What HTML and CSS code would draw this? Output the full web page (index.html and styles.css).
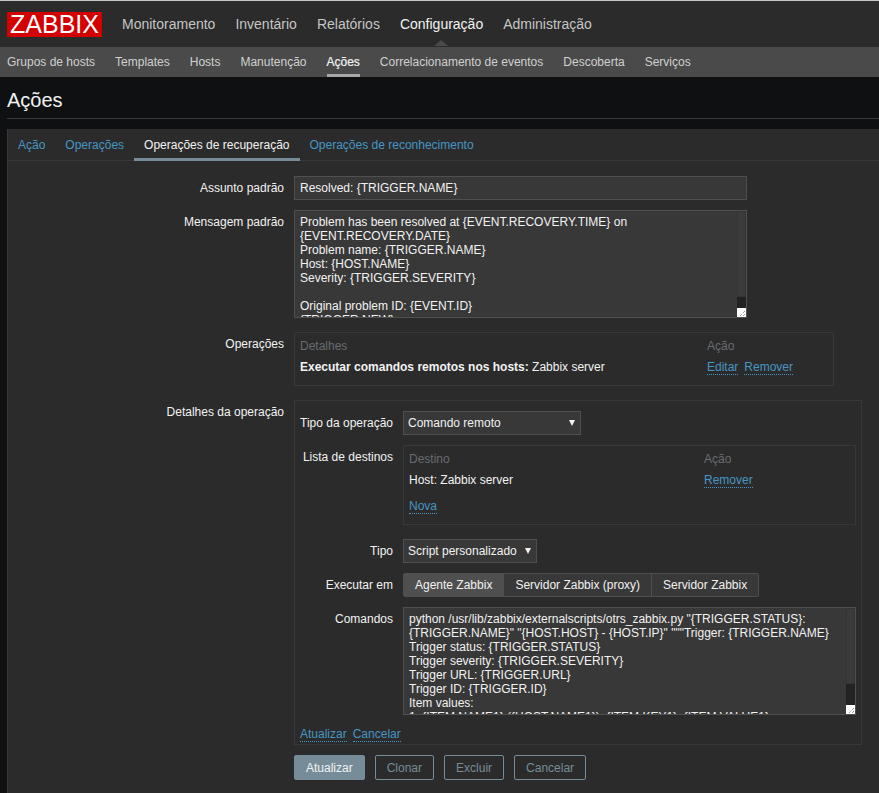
FILE: index.html
```html
<!DOCTYPE html>
<html lang="pt">
<head>
<meta charset="UTF-8" />
<meta name="viewport" content="width=device-width, initial-scale=1" />
<title>Ações</title>
<link rel="stylesheet" href="styles.css">
</head>
<body>

<header class="topbar">
  <a class="logo" href="#">ZABBIX</a>
  <nav class="mainnav">
    <a href="#">Monitoramento</a>
    <a href="#">Inventário</a>
    <a href="#">Relatórios</a>
    <a href="#" class="selected">Configuração</a>
    <a href="#">Administração</a>
  </nav>
</header>

<nav class="subnav">
  <a href="#">Grupos de hosts</a>
  <a href="#">Templates</a>
  <a href="#">Hosts</a>
  <a href="#">Manutenção</a>
  <a href="#" class="selected">Ações</a>
  <a href="#">Correlacionamento de eventos</a>
  <a href="#">Descoberta</a>
  <a href="#">Serviços</a>
</nav>

<h1 class="page-title">Ações</h1>

<main class="panel">
  <div class="tabs">
    <a href="#">Ação</a>
    <a href="#">Operações</a>
    <a href="#" class="selected">Operações de recuperação</a>
    <a href="#">Operações de reconhecimento</a>
  </div>

  <form class="form">
    <div class="row">
      <label>Assunto padrão</label>
      <input class="text-input" type="text" value="Resolved: {TRIGGER.NAME}" />
    </div>

    <div class="row">
      <label>Mensagem padrão</label>
      <div class="area-wrap">
        <textarea class="area" spellcheck="false">Problem has been resolved at {EVENT.RECOVERY.TIME} on {EVENT.RECOVERY.DATE}
Problem name: {TRIGGER.NAME}
Host: {HOST.NAME}
Severity: {TRIGGER.SEVERITY}

Original problem ID: {EVENT.ID}
{TRIGGER.NEW}
</textarea>
        <div class="scrollbar"><div class="thumb thumb-message"></div></div>
        <svg class="resizer" viewBox="0 0 9 9"><path d="M8 3 3 8M8 6 6 8" /></svg>
      </div>
    </div>

    <div class="row">
      <label>Operações</label>
      <div class="box box-ops">
        <div class="list list-ops">
          <span class="th">Detalhes</span>
          <span class="th">Ação</span>
          <span><b>Executar comandos remotos nos hosts:</b> Zabbix server</span>
          <span class="links"><a class="link" href="#">Editar</a><a class="link" href="#">Remover</a></span>
        </div>
      </div>
    </div>

    <div class="row">
      <label>Detalhes da operação</label>
      <div class="box box-details">
        <div class="row inner">
          <label>Tipo da operação</label>
          <div class="select select-op">
            <select><option>Comando remoto</option></select>
          </div>
        </div>

        <div class="row inner wide-gap">
          <label>Lista de destinos</label>
          <div class="box box-targets">
            <div class="list list-targets">
              <span class="th">Destino</span>
              <span class="th">Ação</span>
              <span>Host: Zabbix server</span>
              <span class="links"><a class="link" href="#">Remover</a></span>
            </div>
            <a class="link new-link" href="#">Nova</a>
          </div>
        </div>

        <div class="row inner">
          <label>Tipo</label>
          <div class="select select-type">
            <select><option>Script personalizado</option></select>
          </div>
        </div>

        <div class="row inner">
          <label>Executar em</label>
          <div class="radio-group">
            <span class="radio on">Agente Zabbix</span>
            <span class="radio">Servidor Zabbix (proxy)</span>
            <span class="radio">Servidor Zabbix</span>
          </div>
        </div>

        <div class="row inner">
          <label>Comandos</label>
          <div class="area-wrap">
            <textarea class="area" spellcheck="false">python /usr/lib/zabbix/externalscripts/otrs_zabbix.py "{TRIGGER.STATUS}: {TRIGGER.NAME}" "{HOST.HOST} - {HOST.IP}" """Trigger: {TRIGGER.NAME}
Trigger status: {TRIGGER.STATUS}
Trigger severity: {TRIGGER.SEVERITY}
Trigger URL: {TRIGGER.URL}
Trigger ID: {TRIGGER.ID}
Item values:
1. {ITEM.NAME1} ({HOST.NAME1}): {ITEM.KEY1}: {ITEM.VALUE1}
</textarea>
            <div class="scrollbar"><div class="thumb thumb-commands"></div></div>
            <svg class="resizer" viewBox="0 0 9 9"><path d="M8 3 3 8M8 6 6 8" /></svg>
          </div>
        </div>

        <div class="links form-links">
          <a class="link" href="#">Atualizar</a><a class="link" href="#">Cancelar</a>
        </div>
      </div>
    </div>

    <div class="buttons">
      <button type="button" class="btn primary">Atualizar</button>
      <button type="button" class="btn">Clonar</button>
      <button type="button" class="btn">Excluir</button>
      <button type="button" class="btn">Cancelar</button>
    </div>
  </form>
</main>

</body>
</html>
```

FILE: styles.css
```css
* {
  box-sizing: border-box;
}
html, body {
  height: 793px;
  overflow: hidden;
}
body {
  margin: 0;
  background-color: #0e1012;
  color: #f2f2f2;
  font-family: "Liberation Sans", Arial, sans-serif;
  font-size: 12px;
  line-height: 14px;
  border-top: 1px solid #c8c8c8;
}
a {
  text-decoration: none;
}

/* top menu */
.topbar {
  display: flex;
  align-items: center;
  height: 46px;
  padding-left: 7px;
  background: #2b2b2b;
}
.logo {
  width: 95px;
  height: 25px;
  background: #d40000;
  color: #fff;
  font-size: 25px;
  line-height: 25px;
  text-align: center;
}
.mainnav {
  display: flex;
  gap: 20px;
  margin-left: 20px;
  font-size: 14px;
}
.mainnav a {
  color: #c5c5c5;
}
.mainnav a.selected {
  position: relative;
  color: #f2f2f2;
}
.mainnav a.selected::after {
  content: "";
  position: absolute;
  left: 34px;
  bottom: -15px;
  border: 7px solid transparent;
  border-top: 0;
  border-bottom: 6px solid #4a4a4a;
}

/* second menu */
.subnav {
  display: flex;
  gap: 20px;
  height: 30px;
  padding-left: 7px;
  background: #4a4a4a;
}
.subnav a {
  color: #d0d0d0;
  line-height: 31px;
}
.subnav a.selected {
  color: #f2f2f2;
  border-bottom: 3px solid #a8a8a8;
  -webkit-text-stroke: 0.2px #f2f2f2;
}

.page-title {
  margin: 0 0 10px 7px;
  height: 42px;
  padding-top: 11px;
  border-bottom: 1px solid #383838;
  font-size: 20px;
  font-weight: normal;
  line-height: 24px;
}

/* main panel */
.panel {
  height: 664px;
  margin-left: 7px;
  background: #2b2b2b;
  border-left: 1px solid #383838;
}
.tabs {
  display: flex;
  height: 32px;
  border-bottom: 1px solid #383838;
}
.tabs a {
  padding: 0 10px;
  color: #4796c4;
  line-height: 32px;
}
.tabs a.selected {
  height: 32px;
  color: #f2f2f2;
  border-bottom: 3px solid #768d99;
}

.form {
  padding-top: 15px;
}
.row {
  display: flex;
  align-items: flex-start;
  margin-bottom: 14px;
}
.row > label {
  flex: none;
  width: 276px;
  margin-right: 10px;
  padding-top: 5px;
  text-align: right;
}
.row:first-child {
  margin-bottom: 10px;
}

.text-input, .area, select {
  font-family: inherit;
  font-size: 12px;
  line-height: 14px;
  color: #f2f2f2;
  background: #383838;
  border: 1px solid #4f4f4f;
  outline: 0;
}
.text-input {
  width: 453px;
  height: 24px;
  padding: 0 5px;
}
.area-wrap {
  position: relative;
  width: 453px;
  height: 108px;
}
.area {
  display: block;
  width: 100%;
  height: 100%;
  padding: 4px 5px;
  resize: none;
  overflow: hidden;
}
/* the scrollbar and the grip lie over the textarea */
.scrollbar {
  position: absolute;
  top: 1px;
  right: 1px;
  bottom: 1px;
  width: 9px;
  background: #222;
}
.thumb {
  background: #3b3b3b;
  border: 1px solid #333;
}
.thumb-message {
  height: 86px;
}
.thumb-commands {
  height: 76px;
}
.resizer {
  position: absolute;
  right: 1px;
  bottom: 1px;
  width: 9px;
  height: 9px;
  background: #fff;
}
.resizer path {
  fill: none;
  stroke: #666;
  stroke-width: 1;
  stroke-dasharray: 1 1;
}

.box {
  border: 1px solid #383838;
}
.box-ops {
  width: 540px;
  height: 54px;
  padding: 6px 5px 0;
}
.box-details {
  width: 568px;
  height: 345px;
  padding: 10px 5px 0;
}
.box-targets {
  width: 453px;
  height: 80px;
  padding: 6px 5px 0;
}

.list {
  display: grid;
  row-gap: 7px;
}
.list-ops {
  grid-template-columns: 407px 1fr;
}
.list-targets {
  grid-template-columns: 295px 1fr;
}
.th {
  color: #686c71;
}
.links {
  display: flex;
  gap: 6px;
}
.link {
  color: #4796c4;
  border-bottom: 1px dotted #4796c4;
}
.new-link {
  display: inline-block;
  margin-top: 11px;
}

.row.inner {
  margin-bottom: 10px;
}
.row.inner.wide-gap {
  margin-bottom: 14px;
}
.row.inner > label {
  width: 93px;
}
.select {
  position: relative;
}
.select select {
  display: block;
  width: 100%;
  height: 24px;
  padding: 0 4px;
  appearance: none;
}
.select::after {
  content: "";
  position: absolute;
  right: 6px;
  top: 9px;
  border: 3px solid transparent;
  border-bottom: 0;
  border-top: 6px solid #f2f2f2;
  pointer-events: none;
}
.select-op {
  width: 178px;
}
.select-type {
  width: 134px;
}

.radio-group {
  display: flex;
  height: 24px;
  border: 1px solid #4f4f4f;
  border-radius: 2px;
  background: #383838;
}
.radio {
  padding: 0 11px;
  line-height: 22px;
  border-left: 1px solid #4f4f4f;
  white-space: nowrap;
}
.radio:first-child {
  border-left: 0;
}
.radio.on {
  background: #4f4f4f;
}

.form-links {
  padding-top: 2px;
}

.buttons {
  display: flex;
  gap: 10px;
  margin: -4px 0 0 286px;
}
.btn {
  height: 25px;
  padding: 0 11px;
  font-family: inherit;
  font-size: 12px;
  color: #768d99;
  background: transparent;
  border: 1px solid #768d99;
  border-radius: 2px;
}
.btn.primary {
  color: #f2f2f2;
  background: #768d99;
}
```
